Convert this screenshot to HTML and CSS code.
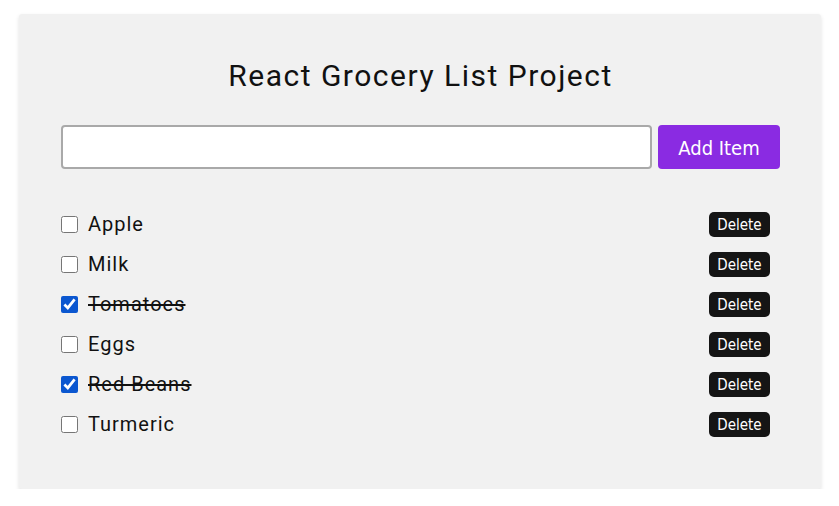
FILE: index.html
```html
<!DOCTYPE html>
<html>
<head>
<meta charset="utf-8">
<link rel="stylesheet" href="styles.css">
</head>
<body>
<main class="card">
  <h1 class="title">React Grocery List Project</h1>
  <form class="add-form">
    <input class="add-input" type="text">
    <button class="add-btn" type="button">Add Item</button>
  </form>
  <ul class="list">
    <li class="row"><label class="item"><input type="checkbox" class="check"><span class="name">Apple</span></label><button class="del" type="button">Delete</button></li>
    <li class="row"><label class="item"><input type="checkbox" class="check"><span class="name">Milk</span></label><button class="del" type="button">Delete</button></li>
    <li class="row"><label class="item"><input type="checkbox" class="check" checked><span class="name done">Tomatoes</span></label><button class="del" type="button">Delete</button></li>
    <li class="row"><label class="item"><input type="checkbox" class="check"><span class="name">Eggs</span></label><button class="del" type="button">Delete</button></li>
    <li class="row"><label class="item"><input type="checkbox" class="check" checked><span class="name done">Red Beans</span></label><button class="del" type="button">Delete</button></li>
    <li class="row"><label class="item"><input type="checkbox" class="check"><span class="name">Turmeric</span></label><button class="del" type="button">Delete</button></li>
  </ul>
</main>
</body>
</html>
```
FILE: styles.css
```css
html, body {
  margin: 0;
  padding: 0;
  background: #fff;
}
body {
  padding: 14px 18px 0 19px;
  font-family: Roboto, "Liberation Sans", sans-serif;
}
.card {
  box-sizing: border-box;
  width: 802px;
  height: 475px;
  background: #f1f1f1;
  border-radius: 3px;
  box-shadow: 0 2px 4px rgba(0,0,0,0.12);
  padding: 44px 41px 0 42px;
}
.title {
  margin: 0;
  text-align: center;
  font-weight: 400;
  font-size: 30px;
  line-height: 36px;
  letter-spacing: 1.5px;
  color: #111;
}
.add-form {
  display: flex;
  gap: 6px;
  margin-top: 31px;
}
.add-input {
  flex: 1;
  height: 44px;
  box-sizing: border-box;
  border: 2px solid #a9a9a9;
  border-radius: 4px;
  background: #fff;
  margin: 0;
}
.add-btn {
  width: 122px;
  height: 44px;
  border: none;
  border-radius: 4px;
  background: #8a2be2;
  color: #fff;
  font-family: "DejaVu Sans Condensed", "DejaVu Sans", sans-serif;
  font-size: 20px;
  padding: 2px 0 0;
  margin: 0;
}
.list {
  list-style: none;
  margin: 35px 10px 0 0;
  padding: 0;
}
.row {
  display: flex;
  align-items: center;
  justify-content: space-between;
  height: 40px;
}
.item {
  display: flex;
  align-items: center;
}
.check {
  width: 17px;
  height: 17px;
  margin: 0 10px 0 0;
  accent-color: #0b57d0;
}
.name {
  font-size: 20px;
  letter-spacing: 1px;
  color: #111;
}
.name.done {
  text-decoration: line-through;
}
.del {
  width: 61px;
  height: 25px;
  border: none;
  border-radius: 5px;
  background: #151515;
  color: #fff;
  font-family: "DejaVu Sans Condensed", "DejaVu Sans", sans-serif;
  font-size: 15px;
  padding: 2px 0 0;
}
```
